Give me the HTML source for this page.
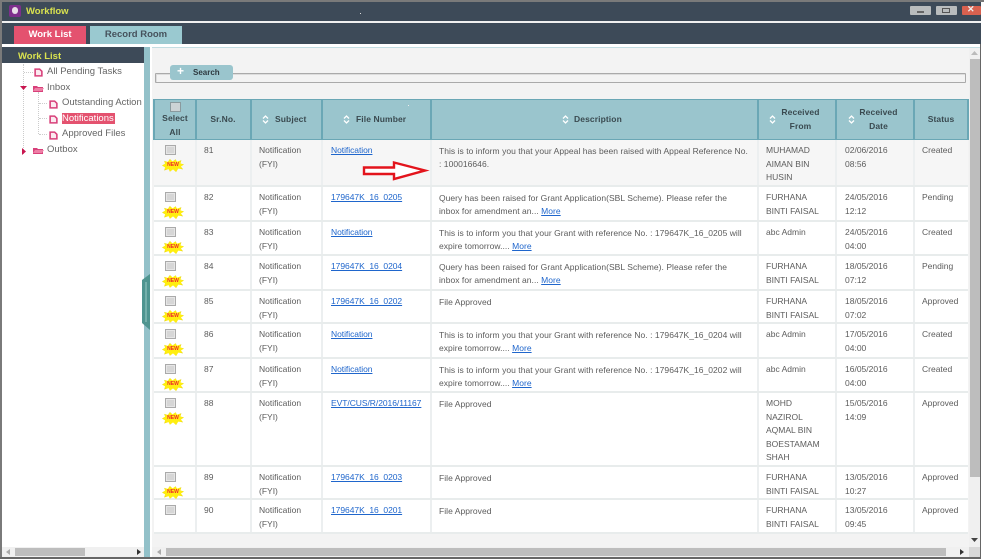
<!DOCTYPE html>
<html><head><meta charset="utf-8"><title>Workflow</title>
<style>
html,body{margin:0;padding:0;background:#fff}
#p{position:relative;width:984px;height:560px;overflow:hidden;background:#fff;font-family:"Liberation Sans",sans-serif;filter:blur(.3px)}
#p div,#p span.a,#p svg.a{position:absolute}
.t{white-space:nowrap;font-size:8.5px;line-height:13.6px;color:#5c5c5c}
.r{left:154px;width:814px;background:#fff;border-bottom:2px solid #e8ecec;box-sizing:border-box}
.v{top:0;bottom:0;width:1.5px;background:#eceff0}
.cb{left:11px;top:5px;width:9px;height:8px;background:#d6d6d6;border:1px solid #aaa;box-shadow:inset 0 0 0 1px #e6e6e6}
.n{left:8px;top:19px;width:22px;height:13px;background:radial-gradient(ellipse at center,#ffee10 58%,#a89a20 100%);clip-path:polygon(0 50%,14% 36%,10% 14%,26% 22%,36% 0,48% 18%,62% 2%,68% 20%,88% 10%,84% 34%,100% 42%,86% 58%,96% 80%,74% 74%,64% 100%,50% 80%,36% 98%,30% 78%,10% 88%,14% 64%);color:#ef2b2b;font:bold 5px/13px "Liberation Sans",sans-serif;text-align:center}
.c2{left:50px;top:4px}.c3{left:105px;top:4px}.c4{left:177px;top:4px;letter-spacing:-.05px}.c5{left:285px;top:4.5px;letter-spacing:.04px}.c6{left:612px;top:4px}.c7{left:691px;top:4px}.c8{left:768px;top:4px}
a{color:#1f66cc;text-decoration:underline}
.h{color:#3a4a50;font-weight:bold;font-size:8.5px;letter-spacing:.1px;text-align:center}
.tr{font-size:9.5px;color:#666;line-height:14px;white-space:nowrap}
.hv{top:99px;height:41px;width:1.5px;background:#6aa7b5}
</style></head><body><div id="p">
<svg width="0" height="0" style="position:absolute"><defs>
<symbol id="d" viewBox="0 0 8 8"><path d="M1 1H5L7 3V7H1Z" fill="#fbeaf0" stroke="#d8407a" stroke-width="1.4"/></symbol>
<symbol id="f" viewBox="0 0 11 7"><path d="M0 1H4L5 2H10V7H0Z" fill="#d8407a"/><path d="M2 3H11L9 6H0Z" fill="#ee7fa6"/></symbol>
<symbol id="s" viewBox="0 0 7 9"><path d="M1 3.5 3.5 1 6 3.5M1 5.5 3.5 8 6 5.5" fill="none" stroke="#fff" stroke-width="1.3"/></symbol>
</defs></svg>

<!-- frame -->
<div style="left:0;top:0;width:984px;height:2px;background:#7a7a7a"></div>
<div style="left:0;top:0;width:2px;height:559px;background:#7a7a7a"></div>
<div style="left:0;top:557px;width:981px;height:2px;background:#666"></div>
<div style="left:980px;top:21px;width:1px;height:538px;background:#666"></div>

<!-- title -->
<div style="left:2px;top:2px;width:979px;height:19px;background:#3d4a58"></div>
<div style="left:9px;top:5px;width:12px;height:12px;background:#7d2f8c;border-radius:2px"></div>
<div style="left:12px;top:7px;width:6px;height:7px;background:#e8dfe8;border-radius:3px"></div>
<div class="t" style="left:26px;top:5px;color:#d9e24f;font-weight:bold;font-size:9.5px">Workflow</div>
<div style="left:360px;top:13px;width:1px;height:1px;background:#ddd"></div>
<div style="left:910px;top:6px;width:21px;height:9px;background:#b9bcbd;border-radius:1px"></div>
<div style="left:917px;top:11px;width:7px;height:2px;border:1px solid #666;box-sizing:border-box"></div>
<div style="left:936px;top:6px;width:21px;height:9px;background:#b9bcbd;border-radius:1px"></div>
<div style="left:942px;top:8px;width:8px;height:5px;border:1px solid #555;box-sizing:border-box"></div>
<div style="left:962px;top:6px;width:19px;height:9px;background:#d9614f;border-radius:1px"></div>
<div class="t" style="left:967px;top:3px;color:#eee;font-weight:bold;font-size:9px">✕</div>

<!-- tabs -->
<div style="left:2px;top:21px;width:979px;height:2px;background:#f0f0f0"></div>
<div style="left:2px;top:23px;width:979px;height:21px;background:#3d4a58"></div>
<div style="left:14px;top:26px;width:72px;height:18px;background:#e4526f"></div>
<div class="t" style="left:14px;top:28px;width:72px;text-align:center;color:#fff;font-weight:bold;font-size:9.5px">Work List</div>
<div style="left:90px;top:26px;width:92px;height:18px;background:#9ac9d0"></div>
<div class="t" style="left:90px;top:28px;width:92px;text-align:center;color:#46525c;font-weight:bold;font-size:9.5px">Record Room</div>

<!-- left panel -->
<div style="left:2px;top:47px;width:142px;height:16px;background:#3d4a58"></div>
<div class="t" style="left:18px;top:50px;color:#d9e24f;font-weight:bold;font-size:9.5px">Work List</div>
<div style="left:144px;top:47px;width:6px;height:510px;background:#93c1c9"></div>
<div style="left:23px;top:64px;width:1px;height:90px;border-left:1px dotted #ccc"></div>
<div style="left:24px;top:72px;width:9px;border-top:1px dotted #ccc"></div>
<div style="left:38px;top:92px;width:1px;height:42px;border-left:1px dotted #ccc"></div>
<div style="left:39px;top:103px;width:8px;border-top:1px dotted #ccc"></div>
<div style="left:39px;top:118px;width:8px;border-top:1px dotted #ccc"></div>
<div style="left:39px;top:134px;width:8px;border-top:1px dotted #ccc"></div>
<svg class="a" style="left:34px;top:68px" width="9" height="9"><use href="#d"/></svg>
<svg class="a" style="left:49px;top:100px" width="9" height="9"><use href="#d"/></svg>
<svg class="a" style="left:49px;top:115px" width="9" height="9"><use href="#d"/></svg>
<svg class="a" style="left:49px;top:131px" width="9" height="9"><use href="#d"/></svg>
<svg class="a" style="left:33px;top:85px" width="11" height="7"><use href="#f"/></svg>
<svg class="a" style="left:33px;top:147px" width="11" height="7"><use href="#f"/></svg>
<svg class="a" style="left:20px;top:85px" width="7" height="6"><path d="M0 1H7L3.5 5Z" fill="#c9154f"/></svg>
<svg class="a" style="left:21px;top:148px" width="6" height="7"><path d="M1 0V7L5 3.5Z" fill="#c9154f"/></svg>
<div class="tr" style="left:47px;top:65px">All Pending Tasks</div>
<div class="tr" style="left:47px;top:81px">Inbox</div>
<div class="tr" style="left:62px;top:96px">Outstanding Action</div>
<div style="left:62px;top:113px;width:53px;height:11px;background:#e4526f"></div>
<div class="tr" style="left:62px;top:112px;color:#fff">Notifications</div>
<div class="tr" style="left:62px;top:127px">Approved Files</div>
<div class="tr" style="left:47px;top:143px">Outbox</div>
<!-- left scrollbar -->
<div style="left:2px;top:547px;width:142px;height:10px;background:#f0f0f0"></div>
<div style="left:15px;top:548px;width:70px;height:8px;background:#bdbdbd"></div>
<svg class="a" style="left:6px;top:549px" width="5" height="6"><path d="M4 0V6L0 3Z" fill="#aaa"/></svg>
<svg class="a" style="left:136px;top:549px" width="5" height="6"><path d="M1 0V6L5 3Z" fill="#333"/></svg>
<!-- splitter handle -->
<svg class="a" style="left:142px;top:274px" width="8" height="56"><path d="M8 0V56L0 49V6Z" fill="#4f9590"/><path d="M4 8V48" stroke="#75b0ab" stroke-width="2"/></svg>

<!-- content -->
<div style="left:150px;top:47px;width:2px;height:510px;background:#fff"></div>
<div style="left:152px;top:47px;width:828px;height:510px;background:#f3f3f3;border-top:1px solid #c3dde2;box-sizing:border-box"></div>
<div style="left:155px;top:73px;width:811px;height:10px;border:1px solid #aaa;box-shadow:inset 1px 1px 0 #ddd;box-sizing:border-box;border-radius:1px"></div>
<div style="left:170px;top:65px;width:63px;height:15px;background:#9ac5cd;border-radius:3px"></div>
<div class="t" style="left:177px;top:65px;color:#fff;font-weight:bold;font-size:12px">+</div>
<div class="t" style="left:193px;top:66px;color:#2f3a40;font-weight:bold;font-size:8px">Search</div>

<!-- table header -->
<div style="left:153px;top:99px;width:815px;height:41px;background:#9ac5cd;border-top:1px solid #6aa7b5;border-bottom:1px solid #6aa7b5;box-sizing:border-box"></div>
<div class="hv" style="left:153px"></div><div class="hv" style="left:195px"></div><div class="hv" style="left:250px"></div><div class="hv" style="left:321px"></div><div class="hv" style="left:430px"></div><div class="hv" style="left:757px"></div><div class="hv" style="left:835px"></div><div class="hv" style="left:913px"></div><div class="hv" style="left:967px"></div>
<div style="left:408px;top:105px;width:1px;height:1px;background:#eee"></div>
<div style="left:170px;top:102px;width:9px;height:8px;background:#ccd3d5;border:1px solid #8a9a9e"></div>
<div class="t h" style="left:154px;top:112px;width:42px">Select<br>All</div>
<div class="t h" style="left:196px;top:113px;width:54px">Sr.No.</div>
<div class="t h" style="left:275px;top:113px">Subject</div>
<div class="t h" style="left:356px;top:113px">File Number</div>
<div class="t h" style="left:574px;top:113px">Description</div>
<div class="t h" style="left:772px;top:106px;width:57px">Received<br>From</div>
<div class="t h" style="left:850px;top:106px;width:57px">Received<br>Date</div>
<div class="t h" style="left:914px;top:113px;width:54px">Status</div>
<svg class="a" style="left:262px;top:115px" width="7" height="9"><use href="#s"/></svg>
<svg class="a" style="left:343px;top:115px" width="7" height="9"><use href="#s"/></svg>
<svg class="a" style="left:562px;top:115px" width="7" height="9"><use href="#s"/></svg>
<svg class="a" style="left:769px;top:115px" width="7" height="9"><use href="#s"/></svg>
<svg class="a" style="left:848px;top:115px" width="7" height="9"><use href="#s"/></svg>

<!-- rows -->
<div class="r" style="top:140px;height:47px;background:#f6f6f6"><div class="v" style="left:41px"></div><div class="v" style="left:96px"></div><div class="v" style="left:167px"></div><div class="v" style="left:276px"></div><div class="v" style="left:603px"></div><div class="v" style="left:681px"></div><div class="v" style="left:759px"></div>
<div class="cb"></div><div class="n">NEW</div><div class="t c2">81</div><div class="t c3">Notification<br>(FYI)</div><div class="t c4"><a>Notification</a></div><div class="t c5">This is to inform you that your Appeal has been raised with Appeal Reference No.<br>: 100016646.</div><div class="t c6">MUHAMAD<br>AIMAN BIN<br>HUSIN</div><div class="t c7">02/06/2016<br>08:56</div><div class="t c8">Created</div></div>

<div class="r" style="top:187px;height:35px"><div class="v" style="left:41px"></div><div class="v" style="left:96px"></div><div class="v" style="left:167px"></div><div class="v" style="left:276px"></div><div class="v" style="left:603px"></div><div class="v" style="left:681px"></div><div class="v" style="left:759px"></div>
<div class="cb"></div><div class="n">NEW</div><div class="t c2">82</div><div class="t c3">Notification<br>(FYI)</div><div class="t c4"><a>179647K_16_0205</a></div><div class="t c5">Query has been raised for Grant Application(SBL Scheme). Please refer the<br>inbox for amendment an... <a>More</a></div><div class="t c6">FURHANA<br>BINTI FAISAL</div><div class="t c7">24/05/2016<br>12:12</div><div class="t c8">Pending</div></div>

<div class="r" style="top:222px;height:34px"><div class="v" style="left:41px"></div><div class="v" style="left:96px"></div><div class="v" style="left:167px"></div><div class="v" style="left:276px"></div><div class="v" style="left:603px"></div><div class="v" style="left:681px"></div><div class="v" style="left:759px"></div>
<div class="cb"></div><div class="n">NEW</div><div class="t c2">83</div><div class="t c3">Notification<br>(FYI)</div><div class="t c4"><a>Notification</a></div><div class="t c5">This is to inform you that your Grant with reference No. : 179647K_16_0205 will<br>expire tomorrow.... <a>More</a></div><div class="t c6">abc Admin</div><div class="t c7">24/05/2016<br>04:00</div><div class="t c8">Created</div></div>

<div class="r" style="top:256px;height:35px"><div class="v" style="left:41px"></div><div class="v" style="left:96px"></div><div class="v" style="left:167px"></div><div class="v" style="left:276px"></div><div class="v" style="left:603px"></div><div class="v" style="left:681px"></div><div class="v" style="left:759px"></div>
<div class="cb"></div><div class="n">NEW</div><div class="t c2">84</div><div class="t c3">Notification<br>(FYI)</div><div class="t c4"><a>179647K_16_0204</a></div><div class="t c5">Query has been raised for Grant Application(SBL Scheme). Please refer the<br>inbox for amendment an... <a>More</a></div><div class="t c6">FURHANA<br>BINTI FAISAL</div><div class="t c7">18/05/2016<br>07:12</div><div class="t c8">Pending</div></div>

<div class="r" style="top:291px;height:33px"><div class="v" style="left:41px"></div><div class="v" style="left:96px"></div><div class="v" style="left:167px"></div><div class="v" style="left:276px"></div><div class="v" style="left:603px"></div><div class="v" style="left:681px"></div><div class="v" style="left:759px"></div>
<div class="cb"></div><div class="n">NEW</div><div class="t c2">85</div><div class="t c3">Notification<br>(FYI)</div><div class="t c4"><a>179647K_16_0202</a></div><div class="t c5">File Approved</div><div class="t c6">FURHANA<br>BINTI FAISAL</div><div class="t c7">18/05/2016<br>07:02</div><div class="t c8">Approved</div></div>

<div class="r" style="top:324px;height:35px"><div class="v" style="left:41px"></div><div class="v" style="left:96px"></div><div class="v" style="left:167px"></div><div class="v" style="left:276px"></div><div class="v" style="left:603px"></div><div class="v" style="left:681px"></div><div class="v" style="left:759px"></div>
<div class="cb"></div><div class="n">NEW</div><div class="t c2">86</div><div class="t c3">Notification<br>(FYI)</div><div class="t c4"><a>Notification</a></div><div class="t c5">This is to inform you that your Grant with reference No. : 179647K_16_0204 will<br>expire tomorrow.... <a>More</a></div><div class="t c6">abc Admin</div><div class="t c7">17/05/2016<br>04:00</div><div class="t c8">Created</div></div>

<div class="r" style="top:359px;height:34px"><div class="v" style="left:41px"></div><div class="v" style="left:96px"></div><div class="v" style="left:167px"></div><div class="v" style="left:276px"></div><div class="v" style="left:603px"></div><div class="v" style="left:681px"></div><div class="v" style="left:759px"></div>
<div class="cb"></div><div class="n">NEW</div><div class="t c2">87</div><div class="t c3">Notification<br>(FYI)</div><div class="t c4"><a>Notification</a></div><div class="t c5">This is to inform you that your Grant with reference No. : 179647K_16_0202 will<br>expire tomorrow.... <a>More</a></div><div class="t c6">abc Admin</div><div class="t c7">16/05/2016<br>04:00</div><div class="t c8">Created</div></div>

<div class="r" style="top:393px;height:74px"><div class="v" style="left:41px"></div><div class="v" style="left:96px"></div><div class="v" style="left:167px"></div><div class="v" style="left:276px"></div><div class="v" style="left:603px"></div><div class="v" style="left:681px"></div><div class="v" style="left:759px"></div>
<div class="cb"></div><div class="n">NEW</div><div class="t c2">88</div><div class="t c3">Notification<br>(FYI)</div><div class="t c4"><a>EVT/CUS/R/2016/11167</a></div><div class="t c5">File Approved</div><div class="t c6">MOHD<br>NAZIROL<br>AQMAL BIN<br>BOESTAMAM<br>SHAH</div><div class="t c7">15/05/2016<br>14:09</div><div class="t c8">Approved</div></div>

<div class="r" style="top:467px;height:33px"><div class="v" style="left:41px"></div><div class="v" style="left:96px"></div><div class="v" style="left:167px"></div><div class="v" style="left:276px"></div><div class="v" style="left:603px"></div><div class="v" style="left:681px"></div><div class="v" style="left:759px"></div>
<div class="cb"></div><div class="n">NEW</div><div class="t c2">89</div><div class="t c3">Notification<br>(FYI)</div><div class="t c4"><a>179647K_16_0203</a></div><div class="t c5">File Approved</div><div class="t c6">FURHANA<br>BINTI FAISAL</div><div class="t c7">13/05/2016<br>10:27</div><div class="t c8">Approved</div></div>

<div class="r" style="top:500px;height:34px"><div class="v" style="left:41px"></div><div class="v" style="left:96px"></div><div class="v" style="left:167px"></div><div class="v" style="left:276px"></div><div class="v" style="left:603px"></div><div class="v" style="left:681px"></div><div class="v" style="left:759px"></div>
<div class="cb"></div><div class="t c2">90</div><div class="t c3">Notification<br>(FYI)</div><div class="t c4"><a>179647K_16_0201</a></div><div class="t c5">File Approved</div><div class="t c6">FURHANA<br>BINTI FAISAL</div><div class="t c7">13/05/2016<br>09:45</div><div class="t c8">Approved</div></div>

<!-- red arrow -->
<svg class="a" style="left:360px;top:159px" width="70" height="24"><path d="M4 8.5H34V3.5L65 11.5 34 20V15H4Z" fill="#fff" stroke="#e3141c" stroke-width="2.4"/></svg>

<!-- scrollbars -->
<div style="left:969px;top:48px;width:11px;height:499px;background:#f0f0f0"></div>
<div style="left:970px;top:59px;width:10px;height:418px;background:#bdbdbd"></div>
<svg class="a" style="left:971px;top:51px" width="7" height="5"><path d="M0 4H7L3.5 0Z" fill="#bbb"/></svg>
<svg class="a" style="left:971px;top:538px" width="7" height="5"><path d="M0 0H7L3.5 4Z" fill="#444"/></svg>
<div style="left:152px;top:547px;width:828px;height:10px;background:#f0f0f0"></div>
<div style="left:166px;top:548px;width:780px;height:8px;background:#bdbdbd"></div>
<div style="left:969px;top:547px;width:11px;height:10px;background:#d8d8d8"></div>
<svg class="a" style="left:157px;top:549px" width="5" height="6"><path d="M4 0V6L0 3Z" fill="#aaa"/></svg>
<svg class="a" style="left:959px;top:549px" width="5" height="6"><path d="M1 0V6L5 3Z" fill="#333"/></svg>
</div></body></html>
